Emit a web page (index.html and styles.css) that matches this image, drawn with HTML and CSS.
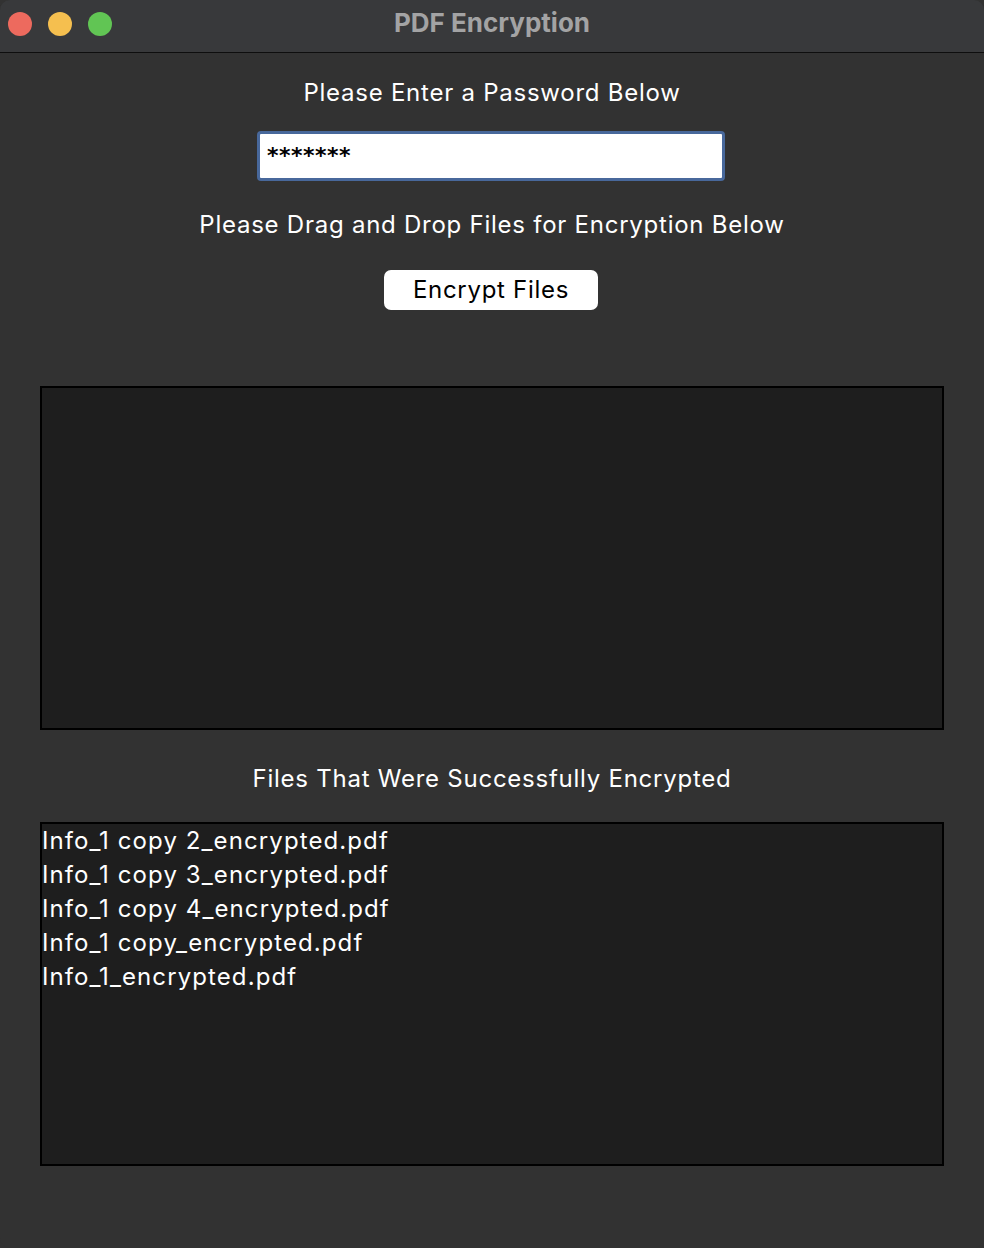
FILE: index.html
```html
<!DOCTYPE html>
<html>
<head>
<meta charset="utf-8">
<link rel="stylesheet" href="styles.css">
</head>
<body>
<div class="window">
  <div class="titlebar">
    <div class="lights">
      <span class="light red"></span>
      <span class="light yellow"></span>
      <span class="light green"></span>
    </div>
    <div class="title">PDF Encryption</div>
  </div>
  <div class="content">
    <div class="label l1">Please Enter a Password Below</div>
    <div class="input"><span class="pw">*******</span></div>
    <div class="label l2">Please Drag and Drop Files for Encryption Below</div>
    <div class="button">Encrypt Files</div>
    <div class="box drop"></div>
    <div class="label l3">Files That Were Successfully Encrypted</div>
    <div class="box list">
      <div class="item">Info_1 copy 2_encrypted.pdf</div>
      <div class="item">Info_1 copy 3_encrypted.pdf</div>
      <div class="item">Info_1 copy 4_encrypted.pdf</div>
      <div class="item">Info_1 copy_encrypted.pdf</div>
      <div class="item">Info_1_encrypted.pdf</div>
    </div>
  </div>
</div>
</body>
</html>
```
FILE: styles.css
```css
html, body {
  margin: 0;
  padding: 0;
  background: #323232;
}
body {
  width: 984px;
  height: 1248px;
  overflow: hidden;
  font-family: Inter, "Noto Sans", sans-serif;
}
.window {
  width: 984px;
  height: 1248px;
  background: #323232;
  border-radius: 10px;
  overflow: hidden;
}
.titlebar {
  position: relative;
  height: 52px;
  background: #38393b;
  border-bottom: 1px solid #0e0e0e;
  display: flex;
  align-items: center;
  justify-content: center;
}
.lights {
  position: absolute;
  left: 8px;
  top: 12px;
  display: flex;
  gap: 16px;
}
.light {
  width: 24px;
  height: 24px;
  border-radius: 50%;
  display: block;
}
.red { background: #ed6a5e; }
.yellow { background: #f5bf4f; }
.green { background: #61c554; }
.title {
  color: #a3a3a4;
  font-weight: 700;
  font-size: 26px;
  margin-left: 0;
  margin-top: -8px;
}
.content {
  display: flex;
  flex-direction: column;
  align-items: center;
}
.label {
  color: #ffffff;
  font-size: 24px;
  letter-spacing: 0.75px;
  line-height: 30px;
}
.l1 { margin-top: 25px; }
.input {
  margin-top: 23px;
  width: 462px;
  height: 44px;
  border: 3px solid #48689b;
  border-radius: 4px;
  background: #fff;
  margin-left: -2px;
}
.pw {
  display: block;
  font-family: "DejaVu Sans", sans-serif;
  font-weight: 700;
  font-size: 22px;
  letter-spacing: 0.5px;
  padding-left: 7px;
  padding-top: 10px;
  color: #000;
  line-height: 24px;
}
.l2 { margin-top: 29px; }
.button {
  margin-top: 30px;
  width: 214px;
  height: 40px;
  background: #fff;
  border-radius: 7px;
  color: #000;
  font-size: 24px;
  letter-spacing: 0.7px;
  line-height: 40px;
  text-align: center;
  margin-left: -2px;
}
.box {
  width: 900px;
  height: 340px;
  border: 2px solid #000;
  background: #1e1e1e;
  align-self: flex-start;
  margin-left: 40px;
}
.drop { margin-top: 76px; }
.l3 { margin-top: 34px; }
.list { margin-top: 28px; }
.item {
  color: #fff;
  font-size: 24px;
  letter-spacing: 1.1px;
  line-height: 34px;
}
```
